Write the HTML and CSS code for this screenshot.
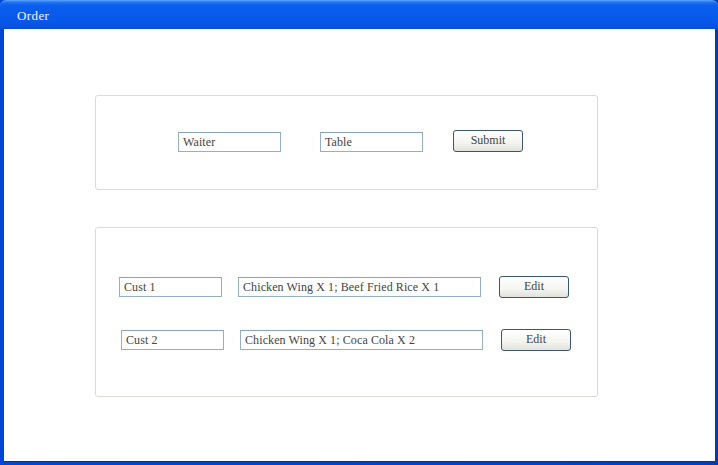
FILE: index.html
```html
<!DOCTYPE html>
<html>
<head>
<meta charset="utf-8">
<link rel="stylesheet" href="styles.css">
</head>
<body>
<div class="window">
  <div class="titlebar"><span class="title">Order</span></div>
  <div class="content">
    <div class="panel panel-top">
      <div class="row row-top">
        <div class="field w-short">Waiter</div>
        <div class="field w-short gap40">Table</div>
        <div class="btn btn-submit">Submit</div>
      </div>
    </div>
    <div class="panel panel-bottom">
      <div class="row row-1">
        <div class="field w-cust">Cust 1</div>
        <div class="field w-order">Chicken Wing X 1; Beef Fried Rice X 1</div>
        <div class="btn btn-edit">Edit</div>
      </div>
      <div class="row row-2">
        <div class="field w-cust">Cust 2</div>
        <div class="field w-order">Chicken Wing X 1; Coca Cola X 2</div>
        <div class="btn btn-edit">Edit</div>
      </div>
    </div>
  </div>
</div>
</body>
</html>
```
FILE: styles.css
```css
html, body {
  margin: 0;
  padding: 0;
  background: #ffffff;
}
body {
  font-family: "Liberation Serif", "DejaVu Serif", serif;
  font-size: 12px;
  color: #333;
}
.window {
  width: 718px;
  height: 465px;
  box-sizing: border-box;
  display: flex;
  flex-direction: column;
  background: linear-gradient(90deg, #0046d6, #0040c8 98%, #0a3aa8);
}
.titlebar {
  height: 29px;
  flex: none;
  box-sizing: border-box;
  background: linear-gradient(#3d8ff9 0px, #1a6af2 2px, #0a5eed 5px, #0758e8 20px, #0a52dc 26px, #0a47c8 29px);
  border-radius: 6px 6px 0 0;
  border-top: 1px solid #4f9bff;
  padding-left: 17px;
  display: flex;
  align-items: center;
}
.title {
  color: #f0f4ff;
  font-family: "Liberation Serif", serif;
  font-size: 13px;
  letter-spacing: 0.4px;
  margin-top: 1px;
}
.content {
  flex: 1;
  background: #ffffff;
  margin: 0 3px 4px 4px;
  padding-top: 66px;
  padding-left: 91px;
  box-shadow: 0 1px 0 #0030b0;
}
.panel {
  width: 503px;
  box-sizing: border-box;
  border: 1px solid #dcdcd4;
  border-radius: 3px;
}
.panel-top {
  height: 95px;
  padding-top: 36px;
  padding-left: 82px;
}
.panel-bottom {
  height: 170px;
  margin-top: 37px;
  padding-top: 48px;
  padding-left: 23px;
}
.row {
  display: flex;
  align-items: center;
}
.field {
  box-sizing: border-box;
  height: 20px;
  border: 1px solid #97aec7;
  border-top-color: #8aa2be;
  background: #fff;
  padding-left: 4px;
  line-height: 18px;
  font-size: 12px;
  color: #444;
  white-space: nowrap;
  letter-spacing: 0.1px;
}
.w-short { width: 103px; }
.gap40 { margin-left: 39px; }
.w-cust { width: 103px; }
.w-order { width: 243px; margin-left: 16px; }
.btn {
  box-sizing: border-box;
  height: 22px;
  border: 1px solid #3e5675;
  border-radius: 3px;
  background: linear-gradient(#ffffff, #f4f4f0 60%, #e2e2dc);
  text-align: center;
  line-height: 19px;
  font-size: 12px;
  color: #444;
}
.btn-submit {
  width: 70px;
  margin-left: 30px;
  margin-top: -3px;
}
.btn-edit {
  width: 70px;
  margin-left: 18px;
}
.row-2 {
  margin-top: 31px;
  margin-left: 2px;
}
```
